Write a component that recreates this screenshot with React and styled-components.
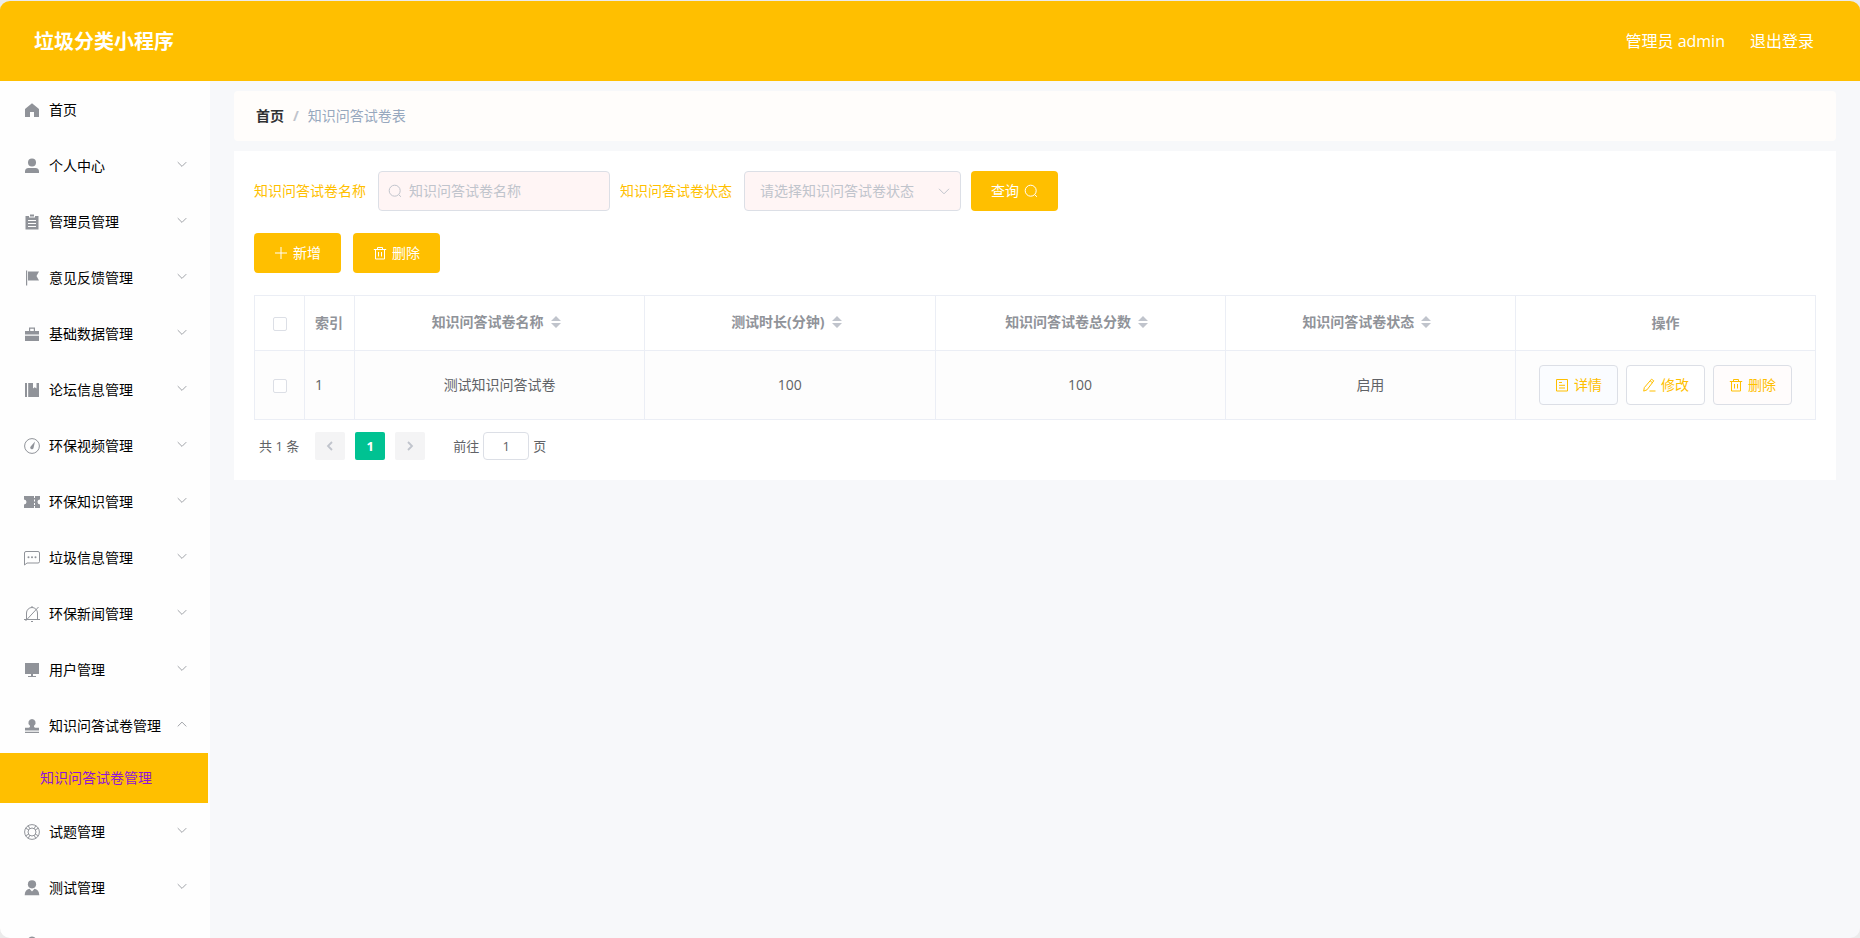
import React, { useState } from "react";
import styled, { createGlobalStyle } from "styled-components";

const Colors = {
  primary: "#ffbf00",
  purple: "#9013d8",
  green: "#00c292",
  pageBg: "#f7f8fa",
  border: "#dcdfe6",
  tableBorder: "#ebeef5",
  text: "#606266",
  muted: "#909399",
  placeholder: "#c0c4cc",
};

const menus = [
  { name: "首页", icon: "home" },
  { name: "个人中心", icon: "user", sub: true },
  { name: "管理员管理", icon: "order", sub: true },
  { name: "意见反馈管理", icon: "flag", sub: true },
  { name: "基础数据管理", icon: "cooperation", sub: true },
  { name: "论坛信息管理", icon: "management", sub: true },
  { name: "环保视频管理", icon: "odometer", sub: true },
  { name: "环保知识管理", icon: "ticket", sub: true },
  { name: "垃圾信息管理", icon: "chat", sub: true },
  { name: "环保新闻管理", icon: "bell", sub: true },
  { name: "用户管理", icon: "platform", sub: true },
  {
    name: "知识问答试卷管理",
    icon: "check",
    sub: true,
    children: ["知识问答试卷管理"],
  },
  { name: "试题管理", icon: "help", sub: true },
  { name: "测试管理", icon: "custom", sub: true },
  { name: "", icon: "user" },
];

const columns = [
  "知识问答试卷名称",
  "测试时长(分钟)",
  "知识问答试卷总分数",
  "知识问答试卷状态",
];

const rows = [
  { id: 1, name: "测试知识问答试卷", time: 100, score: 100, status: "启用" },
];

const menuIcons = {
  home: <path d="M9 2.2 2 8v8h5v-5h4v5h5V8z" />,
  user: (
    <>
      <circle cx="9" cy="5.500" r="4" />
      <path d="M2 16v-1.500a3.500 3.500 0 0 1 3.500-3.500h7a3.500 3.500 0 0 1 3.500 3.500V16z" />
    </>
  ),
  order: (
    <path
      fillRule="evenodd"
      d="M2.500 3H6v1.500h6V3h3.500v13.500h-13zM7 1.500h4v2H7zM5 7v1h8V7zm0 3v1h8v-1zm0 3v1h8v-1z"
    />
  ),
  flag: <path d="M3 1.500h1.200v15H3zM5 2.500h11l-2.500 4.500 2.500 4.500H5z" />,
  cooperation: (
    <path
      fillRule="evenodd"
      d="M2 6h4V2.500h6V6h4v3.500H2zm5.200 0h3.600V3.700H7.200zM2 10.700h14V16H2z"
    />
  ),
  management: (
    <path d="M2 2h2v14H2zM5.200 2H10v5.500l1.700-1.300 1.800 1.300V2H16v14H5.200z" />
  ),
  odometer: (
    <>
      <circle cx="9" cy="9" r="7.400" fill="none" stroke="currentColor" />
      <path d="m12 4.500-1.400 6.200a1.700 1.700 0 1 1-2.700-1.500z" />
    </>
  ),
  ticket: (
    <path
      fillRule="evenodd"
      d="M1 3h10v2h1V3h5v3.500a2.500 2.500 0 0 0 0 5V15h-5v-2h-1v2H1v-3.500a2.500 2.500 0 0 0 0-5zM11 6.500v2h1v-2zm0 3.500v2h1v-2z"
    />
  ),
  chat: (
    <>
      <path
        fill="none"
        stroke="currentColor"
        d="M1.500 16V4A1.500 1.500 0 0 1 3 2.500h12A1.500 1.500 0 0 1 16.500 4v8.500A1.500 1.500 0 0 1 15 14H4z"
      />
      <circle cx="5.500" cy="8.300" r="1" />
      <circle cx="9" cy="8.300" r="1" />
      <circle cx="12.500" cy="8.300" r="1" />
    </>
  ),
  bell: (
    <path
      fill="none"
      stroke="currentColor"
      d="M3.500 14V8a5.500 5.500 0 0 1 11 0v6M1 14.500h16M9 1v1.500M8 16.500h2M2.500 16 15.500 2"
    />
  ),
  platform: <path d="M2 2h14v11H2zM8 13h2v2h3v1H5v-1h3z" />,
  check: (
    <path d="M9 2a3.700 3.700 0 0 1 2.200 6.600c-.5.700-.2 2.200 1.300 2.200H16v2.700H2v-2.700h3.500c1.500 0 1.800-1.500 1.300-2.200A3.700 3.700 0 0 1 9 2zM2 14.800h14V16H2z" />
  ),
  help: (
    <g fill="none" stroke="currentColor">
      <circle cx="9" cy="9" r="7.400" />
      <circle cx="9" cy="9" r="4" />
      <path d="m5.200 2.500 1.500 3M2.500 5.200l3 1.500M12.800 2.500l-1.500 3M15.500 5.200l-3 1.500M5.200 15.500l1.500-3M2.500 12.800l3-1.500M12.800 15.500l-1.500-3M15.500 12.800l-3-1.500" />
    </g>
  ),
  custom: (
    <>
      <circle cx="9" cy="5.300" r="4.100" />
      <path d="M1.700 16.300c0-4 1.800-6 4.800-6.600L9 12.500l2.500-2.800c3 .6 4.800 2.600 4.800 6.600z" />
    </>
  ),
};

const lineIcons = {
  down: <path d="m2 4.800 5 5 5-5" />,
  up: <path d="m2 9.800 5-5 5 5" />,
  left: <path d="M9 3 5 7l4 4" strokeWidth="1.800" />,
  right: <path d="m5 3 4 4-4 4" strokeWidth="1.800" />,
  plus: <path d="M7 1v12M1 7h12" />,
  search: (
    <>
      <circle cx="6.700" cy="6.700" r="5.500" />
      <path d="m10.800 10.800 2.200 2" />
    </>
  ),
  trash: (
    <path d="M.8 3.500h12.400M4.500 3.500v-2h5v2M2.500 3.500v9.500h9V3.500M5.500 6v4.500M8.500 6v4.500" />
  ),
  document: <path d="M1.500 1.500h11v11.500h-11zM4 4.500h3M4 7.300h6M4 10h6" />,
  edit: (
    <path d="M7.500 13h6M9.500 1.200l2.300 1.600-6.800 9-3.300 1.300.6-3.500zM8.200 3l2.300 1.700" />
  ),
};

const MenuIcon = ({ name }) => (
  <MenuSvg viewBox="0 0 18 18" aria-hidden="true">
    {menuIcons[name]}
  </MenuSvg>
);

const Icon = ({ name, size = 14 }) => (
  <LineSvg viewBox="0 0 14 14" $size={size} aria-hidden="true">
    {lineIcons[name]}
  </LineSvg>
);

const Sidebar = () => (
  <Side>
    {menus.map((item) => (
      <React.Fragment key={item.name}>
        <MenuItem href="#">
          <MenuIcon name={item.icon} />
          <span>{item.name}</span>
          {item.sub && (
            <Arrow>
              <Icon name={item.children ? "up" : "down"} size={12} />
            </Arrow>
          )}
        </MenuItem>
        {item.children &&
          item.children.map((child) => (
            <SubItem href="#" key={child}>
              {child}
            </SubItem>
          ))}
      </React.Fragment>
    ))}
  </Side>
);

const SearchForm = () => (
  <Form onSubmit={(e) => e.preventDefault()}>
    <Field>
      <label htmlFor="paperName">知识问答试卷名称</label>
      <InputBox>
        <Prefix>
          <Icon name="search" />
        </Prefix>
        <Input id="paperName" placeholder="知识问答试卷名称" />
      </InputBox>
    </Field>
    <Field>
      <label htmlFor="paperStatus">知识问答试卷状态</label>
      <SelectBox>
        <Select id="paperStatus" defaultValue="">
          <option value="">请选择知识问答试卷状态</option>
          <option value="1">启用</option>
          <option value="2">禁用</option>
        </Select>
        <Suffix>
          <Icon name="down" />
        </Suffix>
      </SelectBox>
    </Field>
    <Button type="submit">
      查询
      <Icon name="search" />
    </Button>
  </Form>
);

const PaperTable = () => {
  const [checked, setChecked] = useState(false);
  const toggle = () => setChecked(!checked);

  return (
    <Table>
      <colgroup>
        <SmallCol />
        <SmallCol />
        {columns.map((title) => (
          <col key={title} />
        ))}
        <ActionCol />
      </colgroup>
      <thead>
        <tr>
          <Th>
            <Checkbox
              aria-label="全选"
              checked={checked}
              onChange={toggle}
            />
          </Th>
          <Th $left>索引</Th>
          {columns.map((title) => (
            <Th key={title}>
              <SortButton>
                {title}
                <Caret viewBox="0 0 10 12" aria-hidden="true">
                  <path d="M5 0 10 5H0zM5 12 0 7h10z" />
                </Caret>
              </SortButton>
            </Th>
          ))}
          <Th>操作</Th>
        </tr>
      </thead>
      <tbody>
        {rows.map((row) => (
          <tr key={row.id}>
            <Td>
              <Checkbox
                aria-label={row.name}
                checked={checked}
                onChange={toggle}
              />
            </Td>
            <Td $left>{row.id}</Td>
            <Td>{row.name}</Td>
            <Td>{row.time}</Td>
            <Td>{row.score}</Td>
            <Td>{row.status}</Td>
            <Td>
              <Actions>
                <ActionButton $bg="#fafcff">
                  <Icon name="document" />
                  详情
                </ActionButton>
                <ActionButton $bg="#ffffff">
                  <Icon name="edit" />
                  修改
                </ActionButton>
                <ActionButton $bg="#fffcfc">
                  <Icon name="trash" />
                  删除
                </ActionButton>
              </Actions>
            </Td>
          </tr>
        ))}
      </tbody>
    </Table>
  );
};

const Pagination = () => (
  <Pager>
    <span>共 1 条</span>
    <Pages>
      <PageButton disabled aria-label="上一页">
        <Icon name="left" />
      </PageButton>
      <PageButton $active>1</PageButton>
      <PageButton disabled aria-label="下一页">
        <Icon name="right" />
      </PageButton>
    </Pages>
    <Jump>
      前往
      <PageInput defaultValue="1" />页
    </Jump>
  </Pager>
);

const App = () => (
  <>
    <GlobalStyle />
    <Page>
      <Header>
        <Title>垃圾分类小程序</Title>
        <UserInfo>
          <span>管理员 admin</span>
          <a href="#">退出登录</a>
        </UserInfo>
      </Header>
      <Body>
        <Sidebar />
        <Main>
          <Breadcrumb>
            <a href="#">首页</a>
            <b>/</b>
            <span>知识问答试卷表</span>
          </Breadcrumb>
          <Card>
            <SearchForm />
            <Toolbar>
              <Button>
                <Icon name="plus" />
                新增
              </Button>
              <Button>
                <Icon name="trash" />
                删除
              </Button>
            </Toolbar>
            <PaperTable />
            <Pagination />
          </Card>
        </Main>
      </Body>
    </Page>
  </>
);

const GlobalStyle = createGlobalStyle`
  * {
    box-sizing: border-box;
  }
  body {
    margin: 0;
    background: #ebebeb;
    font-family: "Open Sans", "Noto Sans CJK SC", sans-serif;
    font-size: 14px;
    line-height: 20px;
    color: ${Colors.text};
  }
  button, input, select {
    font: inherit;
    color: inherit;
    margin: 0;
  }
  button {
    cursor: pointer;
  }
  a {
    color: inherit;
    text-decoration: none;
  }
`;

const Page = styled.div`
  display: flex;
  flex-direction: column;
  height: 100vh;
  border-top: 1px solid #ebebeb;
  border-radius: 10px;
  overflow: hidden;
`;

const Header = styled.header`
  flex: none;
  display: flex;
  align-items: center;
  justify-content: space-between;
  height: 80px;
  padding: 0 46px 0 34px;
  background: ${Colors.primary};
  color: #fff;
`;

const Title = styled.h1`
  margin: 0;
  padding-top: 2px;
  font-size: 20px;
  line-height: 28px;
  font-weight: 700;
`;

const UserInfo = styled.div`
  display: flex;
  gap: 25px;
  font-size: 16px;
  line-height: 24px;
`;

const Body = styled.div`
  flex: 1;
  min-height: 0;
  display: flex;
`;

const Side = styled.nav`
  flex: none;
  width: 210px;
  padding-right: 2px;
  background: #fefefe;
  overflow: hidden;
`;

const MenuItem = styled.a`
  display: flex;
  align-items: center;
  height: 56px;
  padding: 2px 20px 0;
  color: #000;
`;

const MenuSvg = styled.svg`
  flex: none;
  width: 18px;
  height: 18px;
  margin: 0 8px 0 3px;
  fill: currentColor;
  color: ${Colors.muted};
`;

const LineSvg = styled.svg`
  flex: none;
  display: block;
  width: ${(props) => props.$size}px;
  height: ${(props) => props.$size}px;
  fill: none;
  stroke: currentColor;
`;

const Arrow = styled.span`
  margin-left: auto;
  padding-bottom: 4px;
  color: ${Colors.muted};
`;

const SubItem = styled.a`
  display: flex;
  align-items: center;
  height: 50px;
  padding-left: 40px;
  background: ${Colors.primary};
  color: ${Colors.purple};
`;

const Main = styled.main`
  flex: 1;
  min-width: 0;
  padding: 10px 24px;
  background: ${Colors.pageBg};
  overflow: auto;
`;

const Breadcrumb = styled.nav`
  display: flex;
  align-items: center;
  gap: 9px;
  height: 50px;
  margin-bottom: 10px;
  padding: 0 22px;
  border-radius: 4px;
  background: #fffdfb;
  color: #97a8be;
  a {
    font-weight: 700;
    color: #303133;
  }
  b {
    color: ${Colors.placeholder};
  }
`;

const Card = styled.section`
  padding: 20px;
  background: #fff;
`;

const Form = styled.form`
  display: flex;
  flex-wrap: wrap;
  gap: 10px;
`;

const Field = styled.div`
  display: flex;
  align-items: center;
  gap: 12px;
  color: ${Colors.primary};
`;

const InputBox = styled.div`
  position: relative;
  width: 232px;
  color: ${Colors.placeholder};
`;

const SelectBox = styled(InputBox)`
  width: 217px;
`;

const Input = styled.input`
  display: block;
  width: 100%;
  height: 40px;
  padding: 0 30px 2px;
  border: 1px solid ${Colors.border};
  border-radius: 4px;
  background: #fff5f5;
  outline: none;
  &::placeholder {
    color: ${Colors.placeholder};
  }
`;

const Select = styled(Input).attrs({ as: "select" })`
  padding: 0 30px 0 15px;
  appearance: none;
`;

const Prefix = styled.span`
  position: absolute;
  top: 13px;
  left: 10px;
`;

const Suffix = styled.span`
  position: absolute;
  top: 13px;
  right: 10px;
  pointer-events: none;
`;

const Button = styled.button.attrs((props) => ({
  type: props.type || "button",
}))`
  display: inline-flex;
  align-items: center;
  gap: 5px;
  height: 40px;
  padding: 0 20px;
  border: 0;
  border-radius: 4px;
  background: ${Colors.primary};
  color: #fff;
`;

const Toolbar = styled.div`
  display: flex;
  gap: 12px;
  margin: 22px 0;
`;

const Table = styled.table`
  width: 100%;
  table-layout: fixed;
  border-collapse: separate;
  border-spacing: 0;
  border: solid ${Colors.tableBorder};
  border-width: 1px 0 0 1px;
`;

const SmallCol = styled.col`
  width: 50px;
`;

const ActionCol = styled.col`
  width: 300px;
`;

const Th = styled.th`
  height: 55px;
  padding: 0 ${(props) => (props.$left ? 10 : 0)}px;
  border: solid ${Colors.tableBorder};
  border-width: 0 1px 1px 0;
  text-align: ${(props) => (props.$left ? "left" : "center")};
  font-weight: 700;
  color: ${Colors.muted};
`;

const Td = styled(Th).attrs({ as: "td" })`
  height: 69px;
  background: #fdfdfd;
  font-weight: 400;
  color: ${Colors.text};
`;

const SortButton = styled.button`
  display: inline-flex;
  align-items: center;
  padding: 0 0 2px;
  border: 0;
  background: none;
`;

const Caret = styled.svg`
  width: 10px;
  height: 12px;
  margin: 0 7px;
  fill: ${Colors.placeholder};
`;

const Checkbox = styled.input.attrs({ type: "checkbox" })`
  display: inline-block;
  width: 14px;
  height: 14px;
  margin: 0;
  border: 1px solid ${Colors.border};
  border-radius: 2px;
  background: #fff;
  vertical-align: middle;
  appearance: none;
  &:checked {
    background: ${Colors.primary};
  }
`;

const Actions = styled.div`
  display: flex;
  justify-content: center;
  gap: 8px;
`;

const ActionButton = styled(Button)`
  padding: 0 15px;
  border: 1px solid ${Colors.border};
  background: ${(props) => props.$bg};
  color: ${Colors.primary};
`;

const Pager = styled.div`
  display: flex;
  align-items: center;
  margin-top: 12px;
  padding-left: 5px;
  font-size: 13px;
`;

const Pages = styled.div`
  display: flex;
  gap: 10px;
  margin: 0 28px 0 16px;
`;

const PageButton = styled.button`
  display: flex;
  align-items: center;
  justify-content: center;
  width: 30px;
  height: 28px;
  padding: 0;
  border: 0;
  border-radius: 2px;
  background: ${(props) => (props.$active ? Colors.green : "#f4f4f5")};
  color: ${(props) => (props.$active ? "#fff" : Colors.placeholder)};
  font-weight: 700;
`;

const Jump = styled.label`
  display: flex;
  align-items: center;
  gap: 4px;
`;

const PageInput = styled.input`
  width: 46px;
  height: 28px;
  padding: 0 3px;
  border: 1px solid ${Colors.border};
  border-radius: 4px;
  background: #fff;
  text-align: center;
`;

export default App;
